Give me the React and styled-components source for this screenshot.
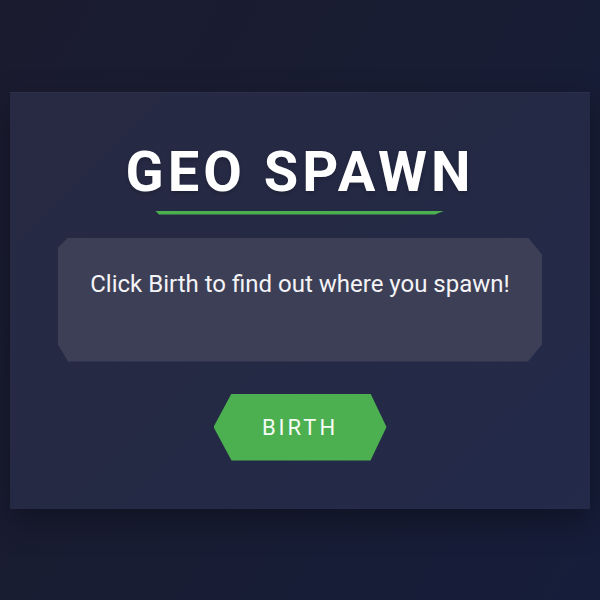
import React from "react";
import styled, { createGlobalStyle } from "styled-components";

const GlobalStyle = createGlobalStyle`
  * { box-sizing: border-box; }
  html, body { margin: 0; padding: 0; }
  body {
    min-height: 100vh;
    font-family: Roboto, "Liberation Sans", sans-serif;
    background: linear-gradient(120deg, #1b1b2f 0%, #181d33 45%, #161d3a 100%);
    color: #fff;
  }
`;

const Page = styled.main`
  min-height: 100vh;
  display: flex;
  align-items: center;
  justify-content: center;
  padding: 0 10px;
`;

const Card = styled.section`
  width: 100%;
  padding: 48px;
  display: flex;
  flex-direction: column;
  align-items: center;
  background: linear-gradient(135deg, #282a43 0%, #242944 50%, #232a4a 100%);
  box-shadow: 0 12px 30px rgba(0, 0, 0, 0.35), inset 0 1px 0 rgba(255, 255, 255, 0.03);
`;

const Title = styled.h1`
  margin: 0;
  font-size: 56px;
  font-weight: 700;
  letter-spacing: 4px;
  line-height: 65px;
  color: #ffffff;
  text-shadow: 0 2px 4px rgba(0, 0, 0, 0.2);
`;

const Underline = styled.div`
  width: 290px;
  height: 4px;
  margin-top: 6px;
  background: #4caf50;
  clip-path: polygon(0 0, 100% 0, calc(100% - 10px) 100%, 4px 100%);
`;

const Message = styled.div`
  width: 100%;
  min-height: 124px;
  margin-top: 23px;
  padding: 32px 24px;
  background: #3c3f56;
  text-align: center;
  font-size: 24px;
  line-height: normal;
  color: #f4f4f6;
  clip-path: polygon(
    10px 0,
    calc(100% - 14px) 0,
    100% 17px,
    100% calc(100% - 17px),
    calc(100% - 14px) 100%,
    10px 100%,
    0 calc(100% - 17px),
    0 10px
  );
`;

const BirthButton = styled.button`
  margin-top: 32px;
  width: 173px;
  height: 67px;
  border: none;
  background: #4caf50;
  color: #f5fbf5;
  font-family: Roboto, "Liberation Sans", sans-serif;
  font-size: 22px;
  letter-spacing: 3px;
  cursor: pointer;
  clip-path: polygon(18px 0, calc(100% - 16px) 0, 100% 50%, calc(100% - 16px) 100%, 18px 100%, 0 50%);
`;

export default function App() {
  return (
    <>
      <GlobalStyle />
      <Page>
        <Card>
          <Title>GEO SPAWN</Title>
          <Underline />
          <Message>Click Birth to find out where you spawn!</Message>
          <BirthButton>BIRTH</BirthButton>
        </Card>
      </Page>
    </>
  );
}
